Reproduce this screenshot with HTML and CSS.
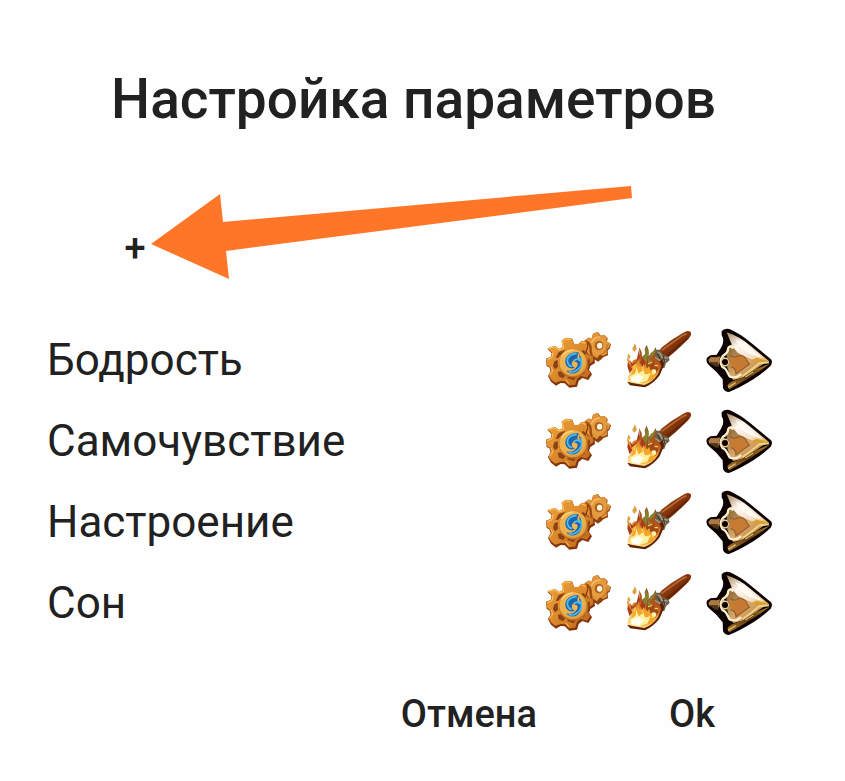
FILE: index.html
```html
<!DOCTYPE html>
<html lang="ru">
<head>
<meta charset="utf-8">
<meta name="viewport" content="width=device-width, initial-scale=1">
<title>Настройка параметров</title>
<link rel="stylesheet" href="styles.css">
</head>
<body>
<svg class="sprite" aria-hidden="true">
  <defs>
    <linearGradient id="gold" x1="0" y1="0" x2="1" y2="1"><stop offset="0" stop-color="#eda23a"/><stop offset=".5" stop-color="#dc8a2c"/><stop offset="1" stop-color="#b85e1a"/></linearGradient>
    <radialGradient id="disc" cx=".45" cy=".4" r=".6"><stop offset="0" stop-color="#efb95c"/><stop offset=".75" stop-color="#efb04c"/><stop offset="1" stop-color="#dc983a"/></radialGradient>
    <linearGradient id="wood" x1="0" y1="0" x2="1" y2="1"><stop offset=".2" stop-color="#a04c1c"/><stop offset=".5" stop-color="#823307"/><stop offset="1" stop-color="#421603"/></linearGradient>
    <linearGradient id="fire" x1=".6" y1="0" x2=".3" y2="1"><stop offset="0" stop-color="#7a5a1c"/><stop offset=".35" stop-color="#b9521c"/><stop offset=".6" stop-color="#f0a63a"/><stop offset="1" stop-color="#ffe596"/></linearGradient>
    <linearGradient id="shine" x1="0" y1="0" x2="1" y2="1"><stop offset="0" stop-color="#a9835c"/><stop offset=".35" stop-color="#fff8f0"/><stop offset=".7" stop-color="#f4dfcb"/><stop offset="1" stop-color="#dda63a"/></linearGradient>
    <linearGradient id="bronze" x1="0" y1="0" x2="1" y2="1"><stop offset="0" stop-color="#7d5a30"/><stop offset=".5" stop-color="#d9a868"/><stop offset="1" stop-color="#b87833"/></linearGradient>
    <linearGradient id="under" x1="0" y1="1" x2="1" y2="0"><stop offset="0" stop-color="#a9762f"/><stop offset=".5" stop-color="#5d3a12"/><stop offset="1" stop-color="#b3812c"/></linearGradient>
    <filter id="soft" x="-10%" y="-10%" width="120%" height="120%"><feGaussianBlur stdDeviation="1"/></filter>

    <symbol id="gears" viewBox="0 0 228 210">
      <g filter="url(#soft)">
      <path fill="#8d420f" d="M134 48L146 42 155 44 159 29 174 24 182 35 193 33 203 42 201 53 213 60 209 74 203 79 204 94 191 99 184 106 174 113 163 106 157 118 143 116 134 90Z"/>
      <path fill="#e2943a" d="M136 48L146 40 155 43 160 28 173 24 180 35 192 32 201 40 199 51 211 58 207 71 199 76 201 90 188 96 180 91 171 103 160 96 150 99 141 90Z"/>
      <ellipse cx="177" cy="65" rx="26" ry="27" fill="#e59b3f"/>
      <path d="M154 57Q162 38 180 39" fill="none" stroke="#f6bd66" stroke-width="4"/>
      <path d="M201 61Q203 82 184 91" fill="none" stroke="#c67927" stroke-width="4"/>
      <path d="M138 52Q154 60 152 82L158 108" fill="none" stroke="#9c4c14" stroke-width="7"/>
      <ellipse cx="177" cy="65" rx="13" ry="14" fill="#ad641d"/>
      <ellipse cx="179" cy="65" rx="8" ry="9" fill="#fff4e2"/>
      <path fill="#82360c" d="M22 74L45 66 58 76 69 70 66 50 78 43 97 45 103 62 114 62 126 50 143 56 145 70 140 84 150 96 163 98 165 117 151 126 147 138 156 151 145 168 127 162 116 171 111 188 88 191 74 178 62 177 48 185 33 173 24 156 32 141 28 130 20 126 18 104 32 99 35 88Z"/>
      <path fill="url(#gold)" d="M22 72L44 65 58 74 68 69 64 50 76 41 95 43 102 59 114 60 125 50 140 54 142 68 136 83 145 94 159 97 160 112 146 120 142 135 151 147 141 161 123 156 111 164 106 182 86 184 76 172 62 171 46 176 35 168 26 155 34 139 29 128 21 123 19 105 33 99 36 86Z"/>
      <path d="M25 74L43 68 57 78 71 73 67 54 77 45 91 47M22 107L36 101 39 86M29 153L38 142 34 130M87 179L77 167M124 54L137 58" fill="none" stroke="#ffc76c" stroke-width="3"/>
      <path fill="#8c4315" d="M56 84L76 77 66 89 54 102 47 101ZM43 112L53 108 54 129 45 136 39 126ZM53 144L62 142 76 155 68 163 56 157ZM82 162L84 157 108 159 101 169ZM119 155L116 150 133 138 134 148ZM143 126L142 112 147 101 151 112ZM136 94L124 81 130 78 139 86Z"/>
      <circle cx="100" cy="118" r="43" fill="#bd6b20"/>
      <circle cx="99" cy="116" r="41" fill="url(#disc)"/>
      <path d="M65 99Q75 80 98 78" fill="none" stroke="#ffd477" stroke-width="4"/>
      </g>
      <path fill="#1d66ae" d="M114 85C92 82 74 98 76 115C78 131 93 137 105 131C97 128 93 119 97 113C100 107 108 105 115 107C110 100 112 92 117 87ZM117 91C132 106 128 135 111 145C98 153 82 147 79 139C94 144 107 136 112 126C116 117 109 112 102 114C107 105 119 107 121 116Z"/>
      <path fill="none" stroke="#48bdf0" stroke-width="5" stroke-linecap="round" d="M108 89Q83 91 82 111Q84 124 94 127M104 108Q114 102 119 109M123 103Q130 128 108 140Q98 146 88 143"/>
    </symbol>

    <symbol id="torch" viewBox="0 0 228 210">
      <g filter="url(#soft)">
      <path fill="url(#wood)" d="M114 86L124 71Q155 45 190 26Q202 18 211 23Q216 28 210 38Q205 46 196 54Q170 80 138 106L121 105Z"/>
      <path fill="none" stroke="#b96a38" stroke-width="5" d="M125 79L187 35 200 29"/>
      <path fill="none" stroke="#5b2308" stroke-width="4" d="M138 96Q175 67 204 41"/>
      <path fill="#6b624b" d="M96 87L107 77 120 77 127 90 145 97 149 108 138 118 133 132 113 133 94 116Z"/>
      <path fill="none" stroke="#aaa089" stroke-width="4" d="M107 84L120 88 126 100 143 102M98 96L120 110 138 111"/>
      <path fill="none" stroke="#3a3020" stroke-width="3" d="M109 83L121 104M97 106L123 121M130 96L134 115"/>
      <path fill="#5e2005" d="M22 174L30 184 75 190Q101 179 119 154L133 121 127 105 110 120 98 150 70 171Z"/>
      <path fill="url(#fire)" d="M22 173L25 155 33 144 24 122 21 100 34 116 41 107 51 106 60 89 57 69 65 84 66 98 76 91 74 75 80 62 86 79 85 95 97 88 107 69 110 87 104 102 119 113 124 126 114 150Q99 174 73 183L37 177Z"/>
      <path fill="#a83c1c" d="M58 73L59 100 47 117 34 129 30 108 37 119 49 111ZM24 114L37 135 29 148 22 127ZM67 98L77 117 69 133 60 116Z"/>
      <path fill="#868033" d="M78 66L87 88 82 103 94 110 84 127 75 111 66 100 75 91ZM110 74L99 96 84 105 92 87Z"/>
      <path fill="#9c481a" d="M82 98L84 117 93 122 101 108 104 127 117 132 106 153 100 134 86 142 78 126Z"/>
      <path fill="#f4a52b" d="M55 106L56 127 62 138 71 120 77 137 88 126 93 147 108 145 98 168 67 178 30 166 38 145 43 129 51 140Z"/>
      <path fill="#fff0a0" d="M30 157L46 147 49 129 56 148 70 138 75 151 91 150 82 170 60 177 32 172Z"/>
      <path fill="#fffef0" d="M34 160L56 151 71 159 57 177 34 171Z"/>
      <path fill="none" stroke="#ffd967" stroke-width="3" d="M84 120L97 114M104 125L114 124M46 122L43 135M85 148L101 152M65 128L72 142"/>
      <path fill="#dca23d" d="M43 58Q52 67 50 76L43 83Q34 77 39 69Q43 66 43 58ZM26 89L32 98 27 106Q20 101 23 94Z"/>
      <circle cx="102" cy="143" r="7" fill="#fff0a8"/>
      </g>
    </symbol>

    <symbol id="arrowhead" viewBox="0 0 228 210">
      <g filter="url(#soft)">
      <path fill="#080502" d="M65 22Q71 12 88 15Q119 28 153 56L213 106Q219 114 212 125Q190 146 160 166Q120 191 87 204Q74 204 69 192L68 166 49 143 27 124Q16 113 21 101L31 94 50 92 64 70Q75 49 65 34Z"/>
      <path fill="url(#bronze)" d="M88 66L98 58 202 112 128 161 100 168 88 150 82 130 80 94Z"/>
      <path fill="url(#shine)" d="M80 25Q119 38 151 65L207 111 176 115 137 98 113 86 98 68Z"/>
      <path fill="#fffaf2" d="M106 46Q139 60 160 80L190 103 150 90 124 74Z"/>
      <path fill="#d7a032" d="M170 101L207 112 178 116 154 109Z"/>
      <path fill="url(#under)" d="M209 119Q164 155 87 196L82 182 96 172 130 160 166 136Z"/>
      <path fill="none" stroke="#ecd38b" stroke-width="6" d="M128 156L153 138 178 118 207 115"/>
      <path fill="none" stroke="#dcb66a" stroke-width="4" d="M84 190L107 176M136 159L160 144"/>
      <path fill="#c67a30" d="M90 98Q101 106 111 98Q130 93 139 110L146 120 128 132 108 148Q108 131 94 128Q90 113 90 98Z"/>
      <path fill="none" stroke="#94602f" stroke-width="4" d="M90 94Q100 104 112 96Q133 91 141 111L148 120 108 149Q107 131 92 128"/>
      <path fill="#ad7941" d="M25 107L33 99 50 100 60 97 57 122 40 121 28 116Z"/>
      <path fill="#4e3515" d="M27 114L54 115 56 130 43 127Z"/>
      <path fill="none" stroke="#080502" stroke-width="11" d="M68 74Q84 54 76 34M63 143L74 160 78 184"/>
      <path fill="none" stroke="#fff0d3" stroke-width="7" stroke-linejoin="round" d="M99 74L95 67Q84 66 84 77Q82 88 69 95Q56 111 67 129Q78 133 83 146L89 157Q102 163 114 157L124 151"/>
      <path fill="#e9c897" d="M66 98L82 102 88 114 82 127 68 128 62 114Z"/>
      <circle cx="75" cy="114" r="9" fill="#080502"/>
      </g>
    </symbol>
  </defs>
</svg>

<main class="dialog">
  <h1 class="title">Настройка параметров</h1>

  <div class="toolbar">
    <button class="add" type="button" aria-label="Добавить">+</button>
    <svg class="pointer" viewBox="0 0 484 96" aria-hidden="true"><path d="M1 60L70 10 73 38 481 2 482 14 76 67 79 95Z"/></svg>
  </div>

  <ul class="params">
    <li class="param">
      <span class="name">Бодрость</span>
      <button class="icon" type="button" aria-label="Настроить"><svg><use href="#gears"/></svg></button>
      <button class="icon" type="button" aria-label="Удалить"><svg><use href="#torch"/></svg></button>
      <button class="icon" type="button" aria-label="Переместить"><svg><use href="#arrowhead"/></svg></button>
    </li>
    <li class="param">
      <span class="name">Самочувствие</span>
      <button class="icon" type="button" aria-label="Настроить"><svg><use href="#gears"/></svg></button>
      <button class="icon" type="button" aria-label="Удалить"><svg><use href="#torch"/></svg></button>
      <button class="icon" type="button" aria-label="Переместить"><svg><use href="#arrowhead"/></svg></button>
    </li>
    <li class="param">
      <span class="name">Настроение</span>
      <button class="icon" type="button" aria-label="Настроить"><svg><use href="#gears"/></svg></button>
      <button class="icon" type="button" aria-label="Удалить"><svg><use href="#torch"/></svg></button>
      <button class="icon" type="button" aria-label="Переместить"><svg><use href="#arrowhead"/></svg></button>
    </li>
    <li class="param">
      <span class="name">Сон</span>
      <button class="icon" type="button" aria-label="Настроить"><svg><use href="#gears"/></svg></button>
      <button class="icon" type="button" aria-label="Удалить"><svg><use href="#torch"/></svg></button>
      <button class="icon" type="button" aria-label="Переместить"><svg><use href="#arrowhead"/></svg></button>
    </li>
  </ul>

  <div class="actions">
    <button class="action" type="button">Отмена</button>
    <button class="action" type="button">Ok</button>
  </div>
</main>
</body>
</html>
```
FILE: styles.css
```css
* {
  box-sizing: border-box;
}

body {
  margin: 0;
  background: #fefefe;
  color: #212121;
  font-family: Roboto, "Liberation Sans", sans-serif;
}

button {
  border: 0;
  padding: 0;
  background: none;
  color: inherit;
  font: inherit;
  cursor: pointer;
}

.sprite {
  position: absolute;
  width: 0;
  height: 0;
}

.dialog {
  padding: 67px 65px 32px 47px;
}

.title {
  margin: 0;
  font-size: 55px;
  font-weight: 500;
  line-height: 64px;
  text-align: center;
}

.toolbar {
  display: flex;
  align-items: flex-end;
  margin-top: 53px;
  padding-left: 73px;
}

.add {
  width: 30px;
  font-size: 38px;
  font-weight: 500;
  line-height: 64px;
}

.pointer {
  display: block;
  width: 484px;
  height: 96px;
  fill: #ff7628;
}

.params {
  margin: 39px 0;
  padding: 0;
  list-style: none;
}

.param {
  display: flex;
  align-items: center;
  height: 81px;
}

.name {
  flex: 1;
  font-size: 44px;
}

.icon {
  width: 80px;
  padding-bottom: 2px;
}

.icon svg {
  display: block;
  width: 76px;
  height: 70px;
}

.actions {
  display: flex;
  justify-content: flex-end;
  gap: 2px;
}

.action {
  padding: 0 65px;
  font-size: 38px;
  font-weight: 500;
  line-height: 64px;
}
```
